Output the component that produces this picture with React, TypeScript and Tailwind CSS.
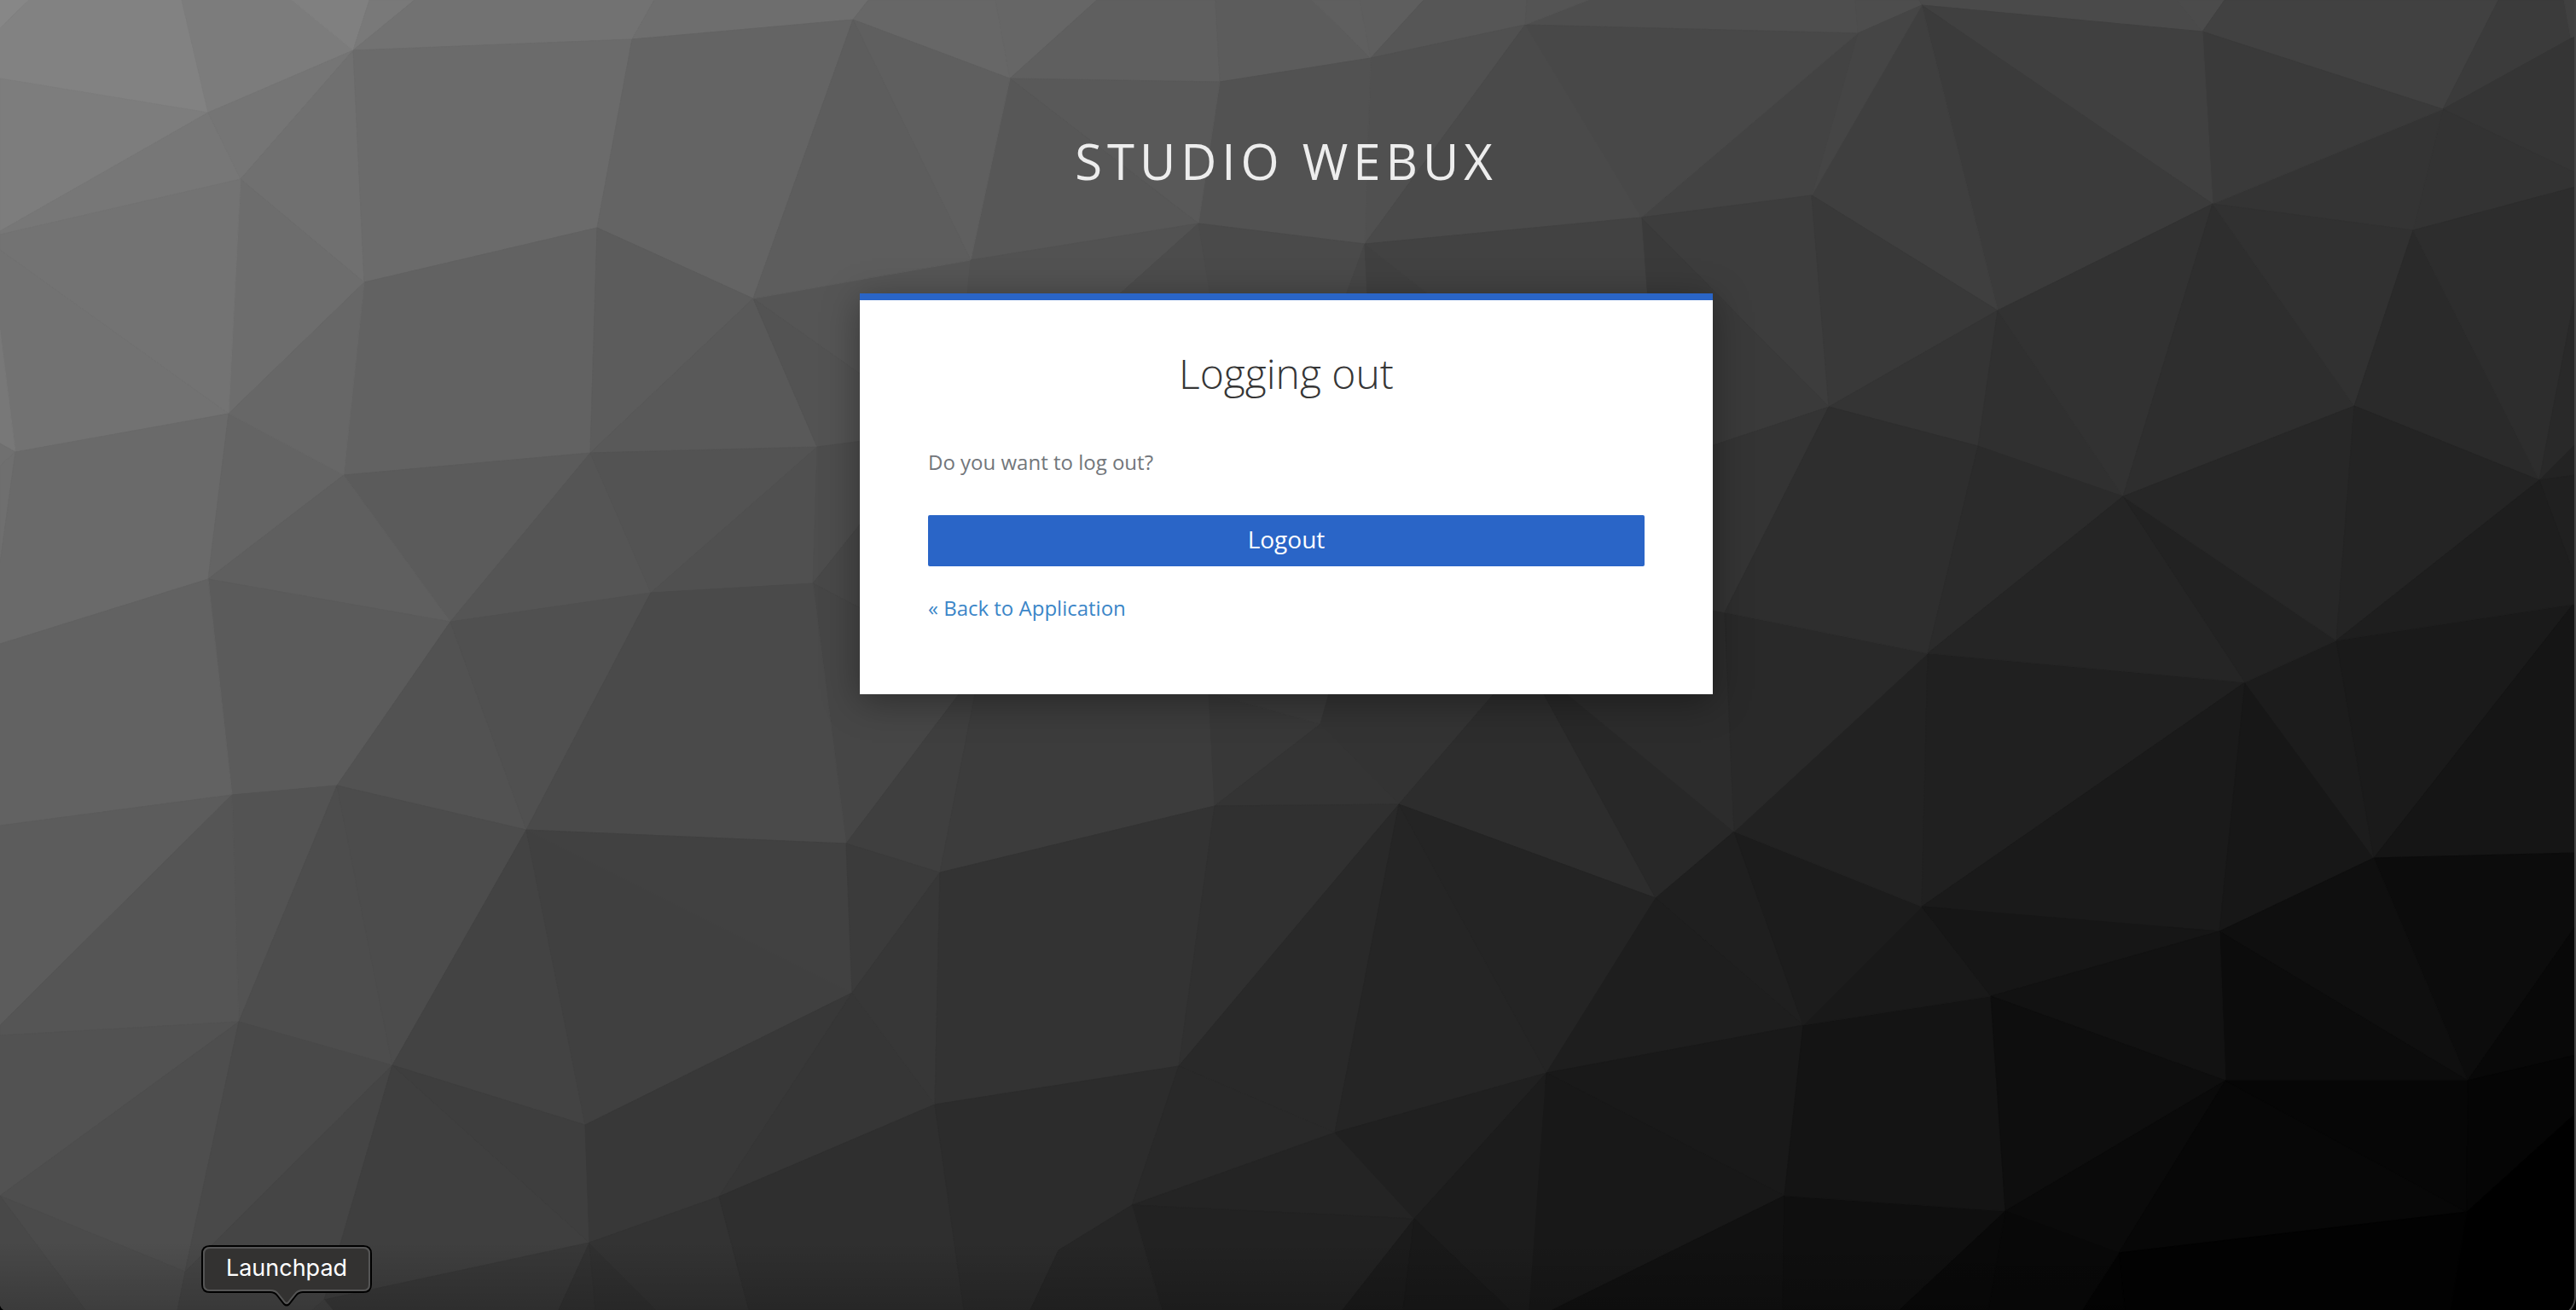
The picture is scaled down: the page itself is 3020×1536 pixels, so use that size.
const V: Record<string, [number, number]> = {
  a: [244, 132], b: [414, 59], c: [282, 210], d: [427, 331], e: [741, 46], f: [1000, 23],
  g: [700, 267], h: [883, 350], i: [268, 485], j: [18, 530], k: [403, 557], l: [692, 531],
  m: [958, 524], n: [244, 679], o: [528, 729], p: [763, 695], q: [953, 684],
  r: [272, 932], s: [395, 921], t: [617, 973], u: [992, 989], v: [280, 1198], w: [460, 1249],
  x: [686, 1319], y: [999, 1164], z: [843, 1403],
  A: [691, 1457], B: [380, 1524], C: [217, 1491], D: [1096, 1295], E: [1102, 1023],
  F: [1424, 945], G: [1640, 943], H: [1548, 849], I: [1382, 1250], J: [1327, 1413],
  K: [1565, 1328], L: [1658, 1429], M: [1813, 1258], N: [1941, 1053], O: [1241, 1466],
  P: [1787, 772], Q: [2033, 975], R: [2092, 1402], S: [2114, 1202],
  a2: [2178, 39], b2: [2253, 6], c2: [2582, 37], d2: [2864, 128], e2: [3014, 45],
  f2: [2124, 229], g2: [2342, 364], h2: [2594, 239], i2: [2829, 270], j2: [2760, 476],
  k2: [2144, 477], l2: [2319, 523], m2: [2489, 582], n2: [2977, 563], o2: [2022, 718],
  p2: [2260, 766], q2: [2739, 751], s2: [2632, 800], t2: [2783, 1006], u2: [2602, 1092],
  v2: [2253, 1063], w2: [2334, 1168], x2: [2609, 1267], y2: [2893, 1267], z2: [2892, 1421],
  A2: [2484, 1469], B2: [2351, 1420],
  a3: [1184, 92], b3: [1430, 96], c3: [1607, 68], d3: [1788, 29], e3: [1405, 262],
  f3: [1600, 286], g3: [1924, 255], h3: [1138, 305],
};

// Each facet: corner names or "x,y" pairs, then the grey level.
const FACETS: [string, number][] = [
  ["0,0 34,0 0,33", 0x87],
  ["34,0 213,0 a 0,92 0,33", 0x82],
  ["213,0 342,0 b a", 0x7c],
  ["342,0 433,0 b", 0x80],
  ["433,0 486,0 b", 0x79],
  ["0,92 a 0,271", 0x7d],
  ["0,271 a c 0,275", 0x77],
  ["a b c", 0x75],
  ["b c d", 0x70],
  ["486,0 767,0 e b", 0x72],
  ["b e g d", 0x6b],
  ["767,0 1018,0 f e", 0x6e],
  ["e f h g", 0x64],
  ["d g l k", 0x62],
  ["g h l", 0x5c],
  ["h m l", 0x59],
  ["c d i", 0x6d],
  ["0,275 c i 0,293", 0x73],
  ["0,293 i j 0,387", 0x72],
  ["0,387 j 0,520", 0x78],
  ["0,520 j 0,546", 0x70],
  ["0,546 j 0,660", 0x6f],
  ["0,660 j i n 0,755", 0x6a],
  ["i k n", 0x64],
  ["i d k", 0x67],
  ["k l o", 0x5b],
  ["k o n", 0x5f],
  ["l p o", 0x55],
  ["l m p", 0x53],
  ["m q p", 0x50],
  ["h 1138,305 1138,530", 0x55],
  ["h 1138,530 m", 0x53],
  ["m 1138,500 1060,550 q", 0x4d],
  ["q 1060,550 1060,740", 0x48],
  ["q 1060,740 1124,814 u", 0x46],
  ["n o s r", 0x5b],
  ["0,755 n r 0,968", 0x62],
  ["o s t", 0x52],
  ["o p t", 0x50],
  ["p q u t", 0x4a],
  ["0,968 r 0,1202", 0x5c],
  ["r s v", 0x53],
  ["0,1202 r v 0,1214", 0x55],
  ["0,1214 v 0,1402", 0x52],
  ["v C 0,1402", 0x4e],
  ["s v w", 0x4d],
  ["s w t", 0x4c],
  ["v w C", 0x49],
  ["0,1402 C 208,1536 100,1536", 0x4b],
  ["0,1402 100,1536 0,1536", 0x48],
  ["C w B 366,1536 208,1536", 0x45],
  ["t w x", 0x43],
  ["t x y", 0x40],
  ["t y u", 0x41],
  ["w B A", 0x3f],
  ["w A x", 0x3e],
  ["x y z A", 0x38],
  ["y D z", 0x36],
  ["B A 655,1536 390,1536", 0x38],
  ["B 390,1536 366,1536", 0x42],
  ["A 698,1536 655,1536", 0x32],
  ["A 770,1536 698,1536", 0x30],
  ["A z 878,1536 770,1536", 0x33],
  ["z D 1130,1536 878,1536", 0x2f],
  ["u 1124,814 1143,814 E", 0x3f],
  ["y u E", 0x3b],
  ["y E D", 0x37],
  ["E 1143,814 1160,780 1417,780 F", 0x3c],
  ["F 1417,812 H", 0x38],
  ["H 1417,812 1360,790 1570,770", 0x3a],
  ["H 1570,770 P G", 0x33],
  ["F H G", 0x34],
  ["G P N", 0x2d],
  ["P Q N", 0x28],
  ["P 1900,700 o2 Q", 0x2c],
  ["E F I D", 0x33],
  ["F G I", 0x30],
  ["G K I", 0x29],
  ["G M K", 0x25],
  ["G N M", 0x24],
  ["N Q S", 0x1f],
  ["N S M", 0x1e],
  ["D I J O 1208,1536 1130,1536", 0x2c],
  ["I K J", 0x29],
  ["J K L", 0x24],
  ["K M L", 0x20],
  ["M 1793,1536 1770,1536 L", 0x1c],
  ["M S R", 0x19],
  ["M R 1820,1536 1793,1536", 0x18],
  ["J L 1574,1536 1362,1536", 0x22],
  ["O J 1362,1536 1208,1536", 0x26],
  ["L 1645,1536 1574,1536", 0x1b],
  ["L 1770,1536 1645,1536", 0x19],
  ["R 2090,1536 1820,1536", 0x11],
  ["R B2 2227,1536 2090,1536", 0x0f],
  ["S w2 B2 R", 0x14],
  ["S v2 w2", 0x19],
  ["Q v2 S", 0x1c],
  ["Q p2 v2", 0x22],
  ["p2 s2 v2", 0x20],
  ["o2 p2 Q", 0x29],
  ["v2 s2 u2", 0x1a],
  ["v2 u2 w2", 0x16],
  ["s2 t2 u2", 0x17],
  ["s2 q2 t2", 0x1c],
  ["q2 3020,708 t2", 0x1a],
  ["t2 3020,704 3020,1000", 0x15],
  ["t2 3020,1000 3020,1085 y2", 0x0c],
  ["t2 y2 u2", 0x0f],
  ["u2 y2 x2", 0x0c],
  ["u2 x2 w2", 0x12],
  ["w2 x2 B2", 0x0e],
  ["B2 x2 A2", 0x0a],
  ["x2 z2 A2", 0x07],
  ["x2 y2 z2", 0x06],
  ["y2 3020,1085 3020,1237", 0x08],
  ["y2 3020,1237 3020,1305 z2", 0x05],
  ["z2 3020,1305 3020,1536 2873,1536", 0x00],
  ["A2 z2 2873,1536 2491,1536", 0x02],
  ["A2 2491,1536 2441,1536", 0x03],
  ["B2 A2 2441,1536 2331,1536", 0x08],
  ["B2 2331,1536 2227,1536", 0x09],
  ["1862,0 2175,0 a2 d3", 0x4e],
  ["2175,0 2250,0 b2 a2", 0x4d],
  ["2250,0 2552,0 c2 b2", 0x4a],
  ["2552,0 2608,0 c2", 0x4b],
  ["2608,0 2929,0 d2 c2", 0x41],
  ["2929,0 3006,0 e2 d2", 0x3b],
  ["3006,0 3020,0 3020,43 e2", 0x40],
  ["d2 e2 3020,43 3020,203", 0x35],
  ["d2 3020,203 3020,219 i2", 0x33],
  ["d2 i2 h2", 0x34],
  ["c2 d2 h2", 0x3a],
  ["b2 c2 h2", 0x40],
  ["b2 h2 g2", 0x3b],
  ["b2 g2 f2", 0x3f],
  ["a2 b2 f2", 0x45],
  ["a2 f2 g3", 0x43],
  ["d3 a2 g3", 0x48],
  ["g3 f2 k2", 0x3d],
  ["f2 g2 k2", 0x39],
  ["g3 k2 1940,545 1934,400", 0x3a],
  ["g2 l2 k2", 0x34],
  ["g2 m2 l2", 0x30],
  ["g2 h2 m2", 0x32],
  ["h2 j2 m2", 0x2e],
  ["h2 i2 j2", 0x31],
  ["i2 n2 j2", 0x2a],
  ["i2 3020,219 3020,340 n2", 0x2d],
  ["n2 3020,340 3020,520", 0x29],
  ["k2 o2 1940,700 1940,545", 0x34],
  ["k2 l2 p2 o2", 0x2e],
  ["l2 m2 p2", 0x2b],
  ["m2 s2 p2", 0x25],
  ["m2 q2 s2", 0x22],
  ["m2 j2 q2", 0x27],
  ["j2 n2 q2", 0x24],
  ["n2 3020,520 3020,557", 0x23],
  ["n2 3020,557 3020,680", 0x20],
  ["n2 3020,680 3020,708 q2", 0x1e],
  ["1018,0 1167,0 a3 f", 0x67],
  ["1167,0 1286,0 a3", 0x66],
  ["1286,0 1425,0 b3 a3", 0x5f],
  ["1425,0 1538,0 c3 b3", 0x5c],
  ["1538,0 1594,0 c3", 0x5f],
  ["1594,0 1669,0 c3", 0x5e],
  ["1669,0 1790,0 d3 c3", 0x56],
  ["1790,0 1862,0 d3", 0x54],
  ["c3 d3 f3", 0x50],
  ["d3 g3 f3", 0x4a],
  ["b3 c3 f3 e3", 0x52],
  ["a3 b3 e3", 0x59],
  ["a3 e3 h3", 0x57],
  ["f a3 h3", 0x5f],
  ["f h3 h", 0x5d],
  ["h3 e3 1290,365 1132,365", 0x52],
  ["e3 1422,365 1290,365", 0x4c],
  ["e3 f3 1571,365 1422,365", 0x4a],
  ["f3 1604,365 1571,365", 0x46],
  ["f3 1700,365 1604,365", 0x40],
  ["f3 g3 1932,365 1700,365", 0x42],
];

const points = (shape: string) =>
  shape
    .split(" ")
    .map((t) => (t in V ? V[t].join(",") : t))
    .join(" ");

function Backdrop() {
  return (
    <svg
      aria-hidden="true"
      className="absolute inset-0 -z-10 h-full w-full"
      viewBox="0 0 3020 1536"
      preserveAspectRatio="xMidYMid slice"
    >
      <defs>
        <linearGradient id="floor" x1="0" y1="0" x2="0" y2="1">
          <stop offset="0" stopColor="#000" stopOpacity="0" />
          <stop offset="1" stopColor="#000" stopOpacity="0.18" />
        </linearGradient>
      </defs>
      <rect width="3020" height="1536" fill="#404040" />
      {FACETS.map(([shape, tone]) => {
        const fill = `rgb(${tone},${tone},${tone})`;
        return <polygon key={shape} points={points(shape)} fill={fill} stroke={fill} strokeWidth="1" />;
      })}
      <rect y="1456" width="3020" height="80" fill="url(#floor)" />
      <path d="M3019 0V1520Q3019 1530 3012 1537" fill="none" stroke="#444" strokeWidth="2" />
      <path d="M0 1531Q1 1534 4 1536H0Z" fill="#000" />
    </svg>
  );
}

function DockLabel() {
  return (
    <div className="absolute bottom-1 left-[236px] h-[72px] w-[200px]">
      <svg aria-hidden="true" className="absolute inset-0" width="200" height="72" viewBox="0 0 200 72">
        <path
          d="M10 1H190Q199 1 199 10V46Q199 55 190 55H119Q114 55 111 59L103 69Q100 72 97 69L89 59Q86 55 81 55H10Q1 55 1 46V10Q1 1 10 1Z"
          fill="#333231"
          stroke="#000"
          strokeWidth="2"
        />
        <path
          d="M10 3H190Q197 3 197 10V46Q197 53 190 53H119Q113 53 110 57L102 67Q100 69 98 67L90 57Q87 53 81 53H10Q3 53 3 46V10Q3 3 10 3Z"
          fill="none"
          stroke="#555"
          strokeWidth="2"
        />
      </svg>
      <div className="relative flex h-14 items-center justify-center pb-px font-['Inter',sans-serif] text-[27px] text-white">
        Launchpad
      </div>
    </div>
  );
}

export default function App() {
  return (
    <div className="relative isolate min-h-screen overflow-hidden pr-1 font-['Open_Sans',sans-serif]">
      <Backdrop />
      <header className="px-5 pt-[154px] pb-[120px] text-center text-[58px] leading-[70px] tracking-[6px] text-[#ededed] uppercase">
        Studio Webux
      </header>
      <main className="mx-auto w-full max-w-[1000px] border-t-8 border-[#2a65c7] bg-white px-20 pt-11 pb-20 shadow-[0_8px_40px_rgba(3,3,3,0.35)]">
        <h1 className="text-center text-[48px] leading-[84px] font-light text-[#363636]">Logging out</h1>
        <p className="mt-[42px] text-[24px] leading-10 text-[#72767b]">Do you want to log out?</p>
        <button
          type="button"
          className="mt-[42px] block h-[60px] w-full rounded-xs bg-[#2a65c7] pb-1 text-[28px] leading-10 text-white"
        >
          Logout
        </button>
        <p className="mt-7 text-[24px] leading-[42px]">
          <a href="#" className="text-[#3b86c8]">
            « Back to Application
          </a>
        </p>
      </main>
      <DockLabel />
    </div>
  );
}
